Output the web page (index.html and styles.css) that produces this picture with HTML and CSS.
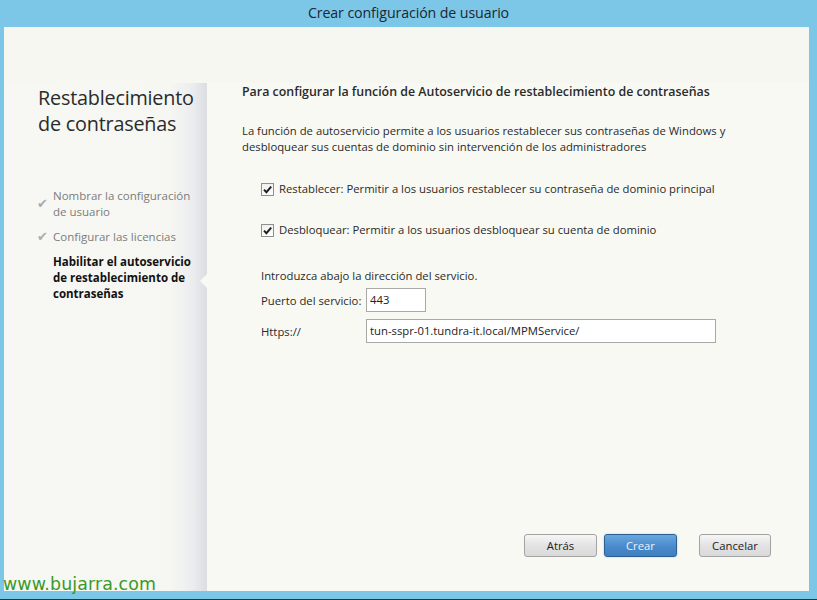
FILE: index.html
```html
<!DOCTYPE html>
<html lang="es">
<head>
<meta charset="utf-8">
<title>Crear configuración de usuario</title>
<link rel="stylesheet" href="styles.css">
</head>
<body>
<div class="window">
  <div class="titlebar">Crear configuración de usuario</div>
  <div class="client">
    <div class="topband"></div>
    <div class="body">
      <aside class="side">
        <h1 class="side-title">Restablecimiento de contraseñas</h1>
        <ul class="steps">
          <li class="step done first"><span class="tick">✔</span><span>Nombrar la configuración de usuario</span></li>
          <li class="step done"><span class="tick">✔</span><span>Configurar las licencias</span></li>
          <li class="step current"><span class="tick"></span><span>Habilitar el autoservicio de restablecimiento de contraseñas</span></li>
        </ul>
      </aside>
      <main class="main">
        <span class="pointer"></span>
        <h2 class="main-title">Para configurar la función de Autoservicio de restablecimiento de contraseñas</h2>
        <p class="intro">La función de autoservicio permite a los usuarios restablecer sus contraseñas de Windows y desbloquear sus cuentas de dominio sin intervención de los administradores</p>
        <label class="check"><span class="box"><svg viewBox="0 0 13 13" width="13" height="13"><path d="M3 6.6 L5.4 9.2 L10.2 3.6" fill="none" stroke="#1d1d1d" stroke-width="1.9"/></svg></span>Restablecer: Permitir a los usuarios restablecer su contraseña de dominio principal</label>
        <label class="check"><span class="box"><svg viewBox="0 0 13 13" width="13" height="13"><path d="M3 6.6 L5.4 9.2 L10.2 3.6" fill="none" stroke="#1d1d1d" stroke-width="1.9"/></svg></span>Desbloquear: Permitir a los usuarios desbloquear su cuenta de dominio</label>
        <div class="service">
          <p class="service-note">Introduzca abajo la dirección del servicio.</p>
          <div class="field"><span class="field-label">Puerto del servicio:</span><span class="input port">443</span></div>
          <div class="field"><span class="field-label">Https://</span><span class="input url">tun-sspr-01.tundra-it.local/MPMService/</span></div>
        </div>
        <div class="buttons">
          <button class="btn">Atrás</button>
          <button class="btn primary">Crear</button>
          <button class="btn cancel">Cancelar</button>
        </div>
      </main>
    </div>
  </div>
  <div class="watermark">www.bujarra.com</div>
</div>
</body>
</html>
```
FILE: styles.css
```css
* { box-sizing: border-box; }
html, body { margin: 0; padding: 0; }
body {
  font-family: "Open Sans", "Noto Sans", sans-serif;
  color: #222;
}
.window {
  position: relative;
  width: 817px;
  height: 600px;
  background: #7cc6e7;
  border-bottom: 1px solid #1f3a4a;
  display: flex;
  flex-direction: column;
}
.titlebar {
  height: 27px;
  line-height: 25px;
  text-align: center;
  font-size: 14.2px;
  color: #1b2733;
  letter-spacing: -0.1px;
}
.client {
  margin: 0 8px 0 4px;
  height: 564px;
  background: #f6f7f1;
  display: flex;
  flex-direction: column;
}
.topband { height: 56px; flex: none; }
.body { flex: 1; display: flex; }
.side {
  width: 203px;
  flex: none;
  background: linear-gradient(to right, #f7f8f3 0%, #f6f7f3 82%, #ebecee 93%, #dcdde1 100%);
  padding: 0 0 0 34px;
}
.side-title {
  margin: 0;
  padding-top: 2px;
  font-size: 19.8px;
  line-height: 26px;
  font-weight: 400;
  color: #2b2b2b;
  letter-spacing: -0.2px;
}
.steps {
  list-style: none;
  margin: 51px 0 0 0;
  padding: 0;
  font-size: 11.5px;
  line-height: 16px;
}
.step { display: flex; margin-bottom: 9px; padding-right: 8px; }
.step.done { color: #7c7c7c; }
.step.current { color: #111; font-weight: 700; }
.tick {
  width: 15px;
  flex: none;
  color: #acacac;
  font-size: 12.5px;
  line-height: 16px;
  margin-left: -1px;
  margin-right: 1px;
}
.step.first .tick { padding-top: 8px; }
.main {
  position: relative;
  flex: 1;
  background: #f8f9f3;
  padding: 1px 0 0 35px;
  display: flex;
  flex-direction: column;
}
.pointer {
  position: absolute;
  left: -7px;
  top: 191px;
  width: 0; height: 0;
  border-top: 7px solid transparent;
  border-bottom: 7px solid transparent;
  border-right: 7px solid #f8f9f3;
}
.main-title {
  margin: 0;
  font-size: 12.4px;
  font-weight: 600;
  line-height: 16px;
  color: #2a2a2a;
}
.intro {
  margin: 23px 0 0 0;
  width: 500px;
  font-size: 11.3px;
  line-height: 16px;
  color: #2a2a2a;
}
.check {
  display: flex;
  align-items: center;
  margin: 26px 0 0 19px;
  font-size: 11.3px;
  color: #2a2a2a;
  line-height: 16px;
}
.check + .check { margin-top: 25px; }
.box {
  width: 13px; height: 13px;
  border: 1px solid #8e8f8f;
  background: linear-gradient(#f0f0f0, #fefefe);
  margin-right: 5px;
  display: flex;
}
.box svg { margin: -1px; }
.service { margin: 30px 0 0 19px; font-size: 11.3px; color: #2a2a2a; }
.service-note { margin: 0; line-height: 16px; }
.field { display: flex; align-items: center; margin-top: 4px; }
.field + .field { margin-top: 7px; }
.field-label { width: 105px; flex: none; }
.input {
  display: block;
  height: 24px;
  border: 1px solid #a9a9a9;
  background: #fff;
  padding: 3px 0 0 3px;
  line-height: 16px;
  color: #222;
}
.port { width: 60px; }
.url { width: 350px; }
.buttons {
  margin-top: auto;
  margin-bottom: 34px;
  display: flex;
  padding-left: 282px;
}
.btn {
  font-family: inherit;
  font-size: 11.3px;
  height: 23px;
  width: 73px;
  border: 1px solid #a3a3a3;
  border-radius: 3px;
  background: linear-gradient(#f6f6f6, #e3e3e3 50%, #d9d9d9 100%);
  color: #222;
  padding: 0;
}
.btn.primary {
  margin-left: 7px;
  background: linear-gradient(#69a8de, #4a8acb 55%, #3f7fc1);
  border-color: #2d5f92;
  color: #eaf3ff;
  box-shadow: 0 0 2px #9cc9ee;
}
.btn.cancel { margin-left: 22px; width: 72px; }
.watermark {
  position: absolute;
  left: 3px;
  top: 574px;
  font-family: "DejaVu Sans", sans-serif;
  font-size: 17.4px;
  color: #3a9a28;
  letter-spacing: 0.1px;
}
```
